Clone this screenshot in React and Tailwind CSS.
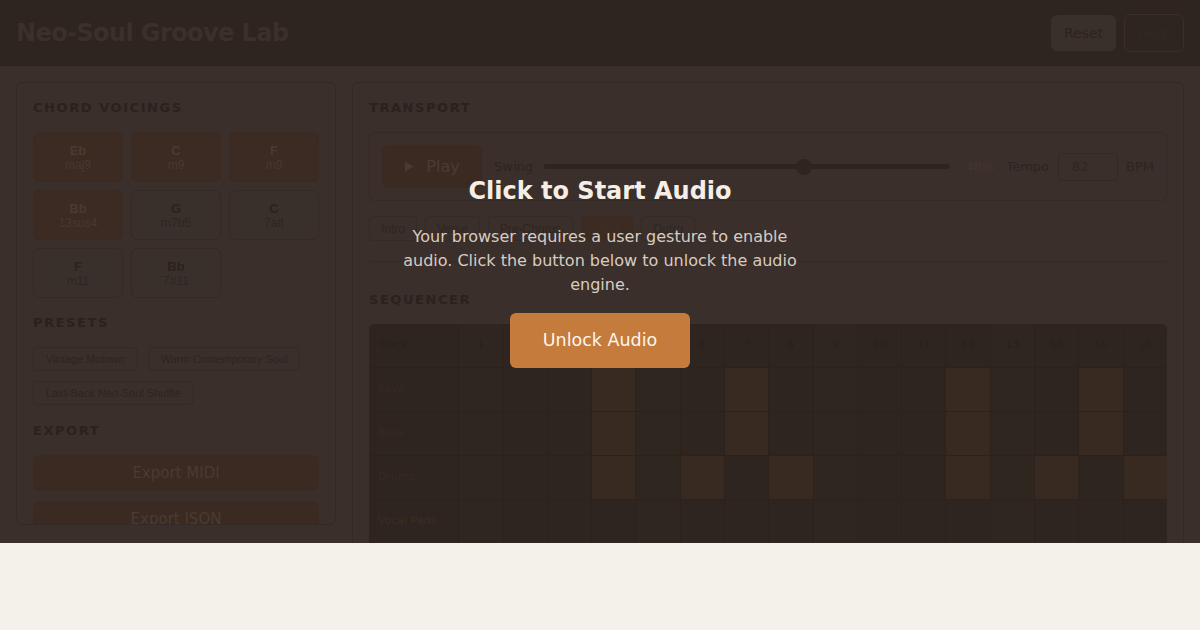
import React from 'react';

const chords = [
  { root: 'Eb', quality: 'maj9', active: true },
  { root: 'C', quality: 'm9', active: true },
  { root: 'F', quality: 'm9', active: true },
  { root: 'Bb', quality: '13sus4', active: true },
  { root: 'G', quality: 'm7b5' },
  { root: 'C', quality: '7alt' },
  { root: 'F', quality: 'm11' },
  { root: 'Bb', quality: '7#11' },
];

const presets = ['Vintage Motown', 'Warm Contemporary Soul', 'Laid-Back Neo-Soul Shuffle'];

const sections = [
  { name: 'Intro' },
  { name: 'Verse' },
  { name: 'Pre-Chorus' },
  { name: 'Hook', active: true },
  { name: 'Outro' },
];

const tracks = [
  { name: 'Keys', steps: [3, 6, 11, 14] },
  { name: 'Bass', steps: [3, 6, 11, 14] },
  { name: 'Drums', steps: [3, 5, 7, 11, 13, 15] },
  { name: 'Vocal Pads', steps: [] },
];

const steps = [...Array(16)].map((_, i) => i);

const Heading = ({ children }) => (
  <h2 className="text-[13px] leading-[18px] font-bold uppercase tracking-[0.12em] text-[#2b221d] mb-[15px]">
    {children}
  </h2>
);

const App = () => {
  const swing = 48;

  return (
    <div className="min-h-screen bg-[#f4f0ea] font-['DejaVu_Sans',sans-serif]">
      <div className="relative h-[543px] overflow-hidden bg-[#3a2f2a] flex flex-col">
        {/* Header */}
        <header className="h-[66px] shrink-0 bg-[#2e2520] flex items-center justify-between px-4">
          <h1 className="text-2xl font-bold tracking-tight text-[#3b302a]">Neo-Soul Groove Lab</h1>
          <div className="flex items-center gap-2">
            <button className="h-9 px-[13px] rounded-md bg-[#3a302b] text-sm text-[#2c231f]">Reset</button>
            <button className="h-[38px] px-[13px] rounded-md border border-[#3a2f2a] text-sm text-[#312822]">Help</button>
          </div>
        </header>

        {/* Main */}
        <main className="grid grid-cols-[320px_1fr] gap-4 p-4 items-start">
          {/* Left card */}
          <section className="h-[443px] overflow-hidden rounded-md border border-[#342a25] p-4">
            <Heading>Chord Voicings</Heading>
            <div className="grid grid-cols-3 gap-2">
              {chords.map((c, i) => (
                <div
                  key={i}
                  className={
                    'h-[50px] rounded-md border flex flex-col items-center justify-center font-["Liberation_Sans",sans-serif] ' +
                    (c.active
                      ? 'bg-[#3b2b22] border-[#3a2a21] text-[#4a3a30]'
                      : 'bg-[#39302b] border-[#352b26] text-[#2b221d]')
                  }
                >
                  <span className="text-[13px] leading-[15px] font-bold">{c.root}</span>
                  <span className={'text-xs leading-[14px] ' + (c.active ? 'text-[#48382f]' : 'text-[#2f2621]')}>{c.quality}</span>
                </div>
              ))}
            </div>

            <div className="mt-4">
              <Heading>Presets</Heading>
              <div className="flex flex-wrap gap-[10px]">
                {presets.map((p) => (
                  <button
                    key={p}
                    className="h-6 px-3 rounded border border-[#352b26] text-[11px] text-[#2e2520] font-['Liberation_Sans',sans-serif]"
                  >
                    {p}
                  </button>
                ))}
              </div>
            </div>

            <div className="mt-[17px]">
              <Heading>Export</Heading>
              <div className="flex flex-col gap-[10px]">
                <button className="h-9 w-full rounded-md bg-[#3a2a22] text-[15px] text-[#4a3b32]">Export MIDI</button>
                <button className="h-9 w-full rounded-md bg-[#3a2a22] text-[15px] text-[#4a3b32]">Export JSON</button>
              </div>
            </div>
          </section>

          {/* Right card */}
          <section className="rounded-md border border-[#342a25] p-4">
            <div className="pb-5 border-b border-[#352b26]">
              <Heading>Transport</Heading>
              <div className="flex items-center rounded-md border border-[#352b26] p-3">
                <button className="w-[100px] h-[43px] rounded-md bg-[#3a2a22] flex items-center justify-center gap-[12px] text-base text-[#4a3b32]">
                  <svg width="10" height="11" viewBox="0 0 10 11" className="fill-[#4a3b32]">
                    <path d="M1 0.5 L9.5 5.5 L1 10.5 Z" />
                  </svg>
                  <span>Play</span>
                </button>
                <span className="ml-3 text-[13px] text-[#2e2520]">Swing</span>
                <div className="relative ml-[11px] flex-1 h-4 flex items-center">
                  <div className="h-[5px] w-full rounded-full bg-[#2f2520]" />
                  <div
                    className="absolute top-0 h-4 w-4 -ml-2 rounded-full bg-[#2f241f]"
                    style={{ left: `${(swing / 75) * 100}%` }}
                  />
                </div>
                <span className="ml-4 text-[13px] text-[#45362d]">{swing}%</span>
                <span className="ml-3 text-[13px] text-[#2e2520]">Tempo</span>
                <div className="ml-[9px] w-[60px] h-7 rounded border border-[#342a25] flex items-center px-[13px] text-[13px] text-[#2f2620]">
                  82
                </div>
                <span className="ml-2 text-[13px] text-[#2e2520]">BPM</span>
              </div>
              <div className="flex gap-2 mt-[15px]">
                {sections.map((s) => (
                  <button
                    key={s.name}
                    className={
                      'h-[25px] px-[11px] rounded border text-xs font-["Liberation_Sans",sans-serif] ' +
                      (s.active
                        ? 'bg-[#3b2b22] border-[#3a2a21] text-[#3f2e24]'
                        : 'border-[#352b26] text-[#2f2621]')
                    }
                  >
                    {s.name}
                  </button>
                ))}
              </div>
            </div>

            <div className="pt-[29px]">
              <Heading>Sequencer</Heading>
              <div className="rounded-md overflow-hidden bg-[#2e2520] pb-3">
                <div className="bg-[#2b221d] grid grid-cols-[89px_repeat(16,1fr)] gap-px">
                  <div className="h-[43px] bg-[#2e2520] flex items-center pl-[9px] text-[11px] text-[#2a211c]">Track</div>
                  {steps.map((i) => (
                    <div
                      key={i}
                      className={
                        'h-[43px] flex items-center justify-center text-[11px] text-[#2a211c] ' +
                        (i % 4 === 0 ? 'bg-[#2f2620]' : 'bg-[#2e2520]')
                      }
                    >
                      {i + 1}
                    </div>
                  ))}
                  {tracks.map((t) => (
                    <React.Fragment key={t.name}>
                      <div
                        className={
                          'h-[43px] bg-[#2e2520] flex items-center pl-[9px] text-[11px] ' +
                          (t.name === 'Vocal Pads' ? 'text-[#3a2e22]' : 'text-[#352a24]')
                        }
                      >
                        {t.name}
                      </div>
                      {steps.map((i) => (
                        <div
                          key={i}
                          className={
                            'h-[43px] ' +
                            (t.steps.includes(i)
                              ? 'bg-[#392a21]'
                              : i % 4 === 0
                              ? 'bg-[#2f2620]'
                              : 'bg-[#2e2520]')
                          }
                        />
                      ))}
                    </React.Fragment>
                  ))}
                </div>
              </div>
            </div>
          </section>
        </main>

        {/* Audio unlock overlay */}
        <div className="absolute inset-0 flex flex-col items-center justify-center text-center">
          <h2 className="text-2xl font-bold text-[#f6eee6] mb-[18px]">Click to Start Audio</h2>
          <p className="w-[400px] text-base leading-6 text-[#d7ccc2] mb-4">
            Your browser requires a user gesture to enable audio. Click the button below to unlock the audio engine.
          </p>
          <button className="w-[180px] h-[55px] rounded-md bg-[#c47b3b] text-[17.5px] text-[#fdf6ee]">
            Unlock Audio
          </button>
        </div>
      </div>
    </div>
  );
};

export default App;
